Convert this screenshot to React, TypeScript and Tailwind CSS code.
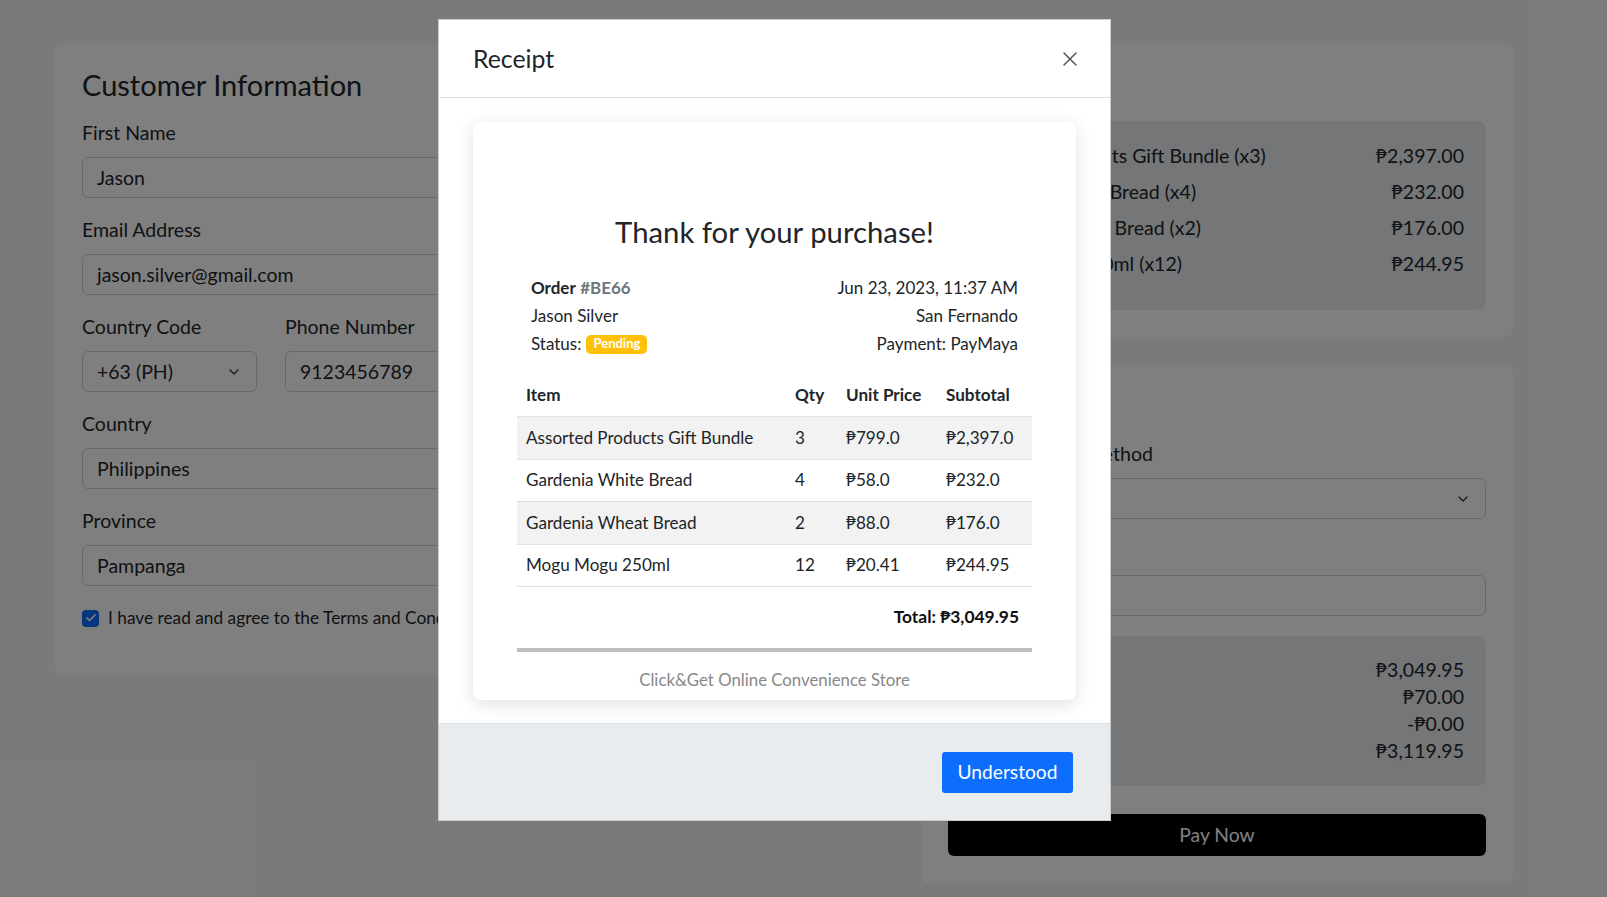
import React from "react";
import { ChevronDown, Check, X } from "lucide-react";

function Label({ children }: { children: React.ReactNode }) {
  return <div className="mb-3 text-[19.5px] leading-6 text-[#212529]">{children}</div>;
}

function Field({ value, select = false }: { value: string; select?: boolean }) {
  return (
    <div className="flex h-[41px] items-center justify-between rounded-md border border-[#ced4da] bg-white px-[14px] text-[19.5px] text-[#212529]">
      <span>{value}</span>
      {select && <ChevronDown size={16} strokeWidth={2} className="text-[#343a40]" />}
    </div>
  );
}

function LeftCard() {
  return (
    <div className="w-[842px] shrink-0 self-start rounded-lg bg-white px-[27px] pb-[46px] pt-[25px]">
      <h3 className="text-[29px] leading-[34px]">Customer Information</h3>
      <div className="mt-[19px] flex flex-col gap-5">
        <div>
          <Label>First Name</Label>
          <Field value="Jason" />
        </div>
        <div>
          <Label>Email Address</Label>
          <Field value="jason.silver@gmail.com" />
        </div>
        <div className="grid grid-cols-[175px_1fr] gap-x-[28px]">
          <div>
            <Label>Country Code</Label>
            <Field value="+63 (PH)" select />
          </div>
          <div>
            <Label>Phone Number</Label>
            <Field value="9123456789" />
          </div>
        </div>
        <div>
          <Label>Country</Label>
          <Field value="Philippines" />
        </div>
        <div>
          <Label>Province</Label>
          <Field value="Pampanga" />
        </div>
        <div className="flex h-6 items-center gap-[9px]">
          <div className="flex h-[17px] w-[17px] items-center justify-center rounded-[4px] bg-[#0d6efd]">
            <Check size={12} strokeWidth={3.5} className="text-white" />
          </div>
          <span className="text-[17.3px] text-[#212529]">I have read and agree to the Terms and Conditions</span>
        </div>
      </div>
    </div>
  );
}

function SummaryCard() {
  const items = [
    ["Assorted Products Gift Bundle (x3)", "₱2,397.00"],
    ["Gardenia White Bread (x4)", "₱232.00"],
    ["Gardenia Wheat Bread (x2)", "₱176.00"],
    ["Mogu Mogu 250ml (x12)", "₱244.95"],
  ];
  return (
    <div className="rounded-lg bg-white px-[27px] pb-[27px] pt-[25px]">
      <h3 className="text-[29px] leading-[34px]">Summary</h3>
      <div className="mt-[19px] rounded-lg bg-[#e9ecef] px-[22px] pb-[28px] pt-[17px]">
        {items.map(([n, p]) => (
          <div key={n} className="flex h-9 items-center justify-between text-[19.5px]">
            <span>{n}</span>
            <span>{p}</span>
          </div>
        ))}
      </div>
    </div>
  );
}

function PaymentCard() {
  const rows = [
    ["Subtotal", "₱3,049.95"],
    ["Shipping Fee", "₱70.00"],
    ["Discount", "-₱0.00"],
    ["Total", "₱3,119.95"],
  ];
  return (
    <div className="rounded-lg bg-white px-[27px] pb-[27px] pt-[25px]">
      <h3 className="text-[29px] leading-[34px]">Payment</h3>
      <div className="mt-[18px] flex flex-col gap-5">
        <div>
          <Label>Select Payment Method</Label>
          <Field value="PayMaya" select />
        </div>
        <div>
          <Label>Delivery Notes</Label>
          <Field value="" />
        </div>
        <div className="rounded-lg bg-[#e9ecef] px-[22px] pb-[22px] pt-[20px]">
          {rows.map(([n, p]) => (
            <div key={n} className="flex h-[27px] items-center justify-between text-[19.5px]">
              <span>{n}</span>
              <span>{p}</span>
            </div>
          ))}
        </div>
      </div>
      <button className="mt-[28px] flex h-[42px] w-full items-center justify-center rounded-md bg-black text-[19.3px] text-white">
        Pay Now
      </button>
    </div>
  );
}

function Receipt() {
  const rows = [
    ["Assorted Products Gift Bundle", "3", "₱799.0", "₱2,397.0"],
    ["Gardenia White Bread", "4", "₱58.0", "₱232.0"],
    ["Gardenia Wheat Bread", "2", "₱88.0", "₱176.0"],
    ["Mogu Mogu 250ml", "12", "₱20.41", "₱244.95"],
  ];
  return (
    <div className="rounded-lg bg-white px-[44px] pb-[8px] pt-[93px] shadow-[0_4px_18px_rgba(0,0,0,0.12)]">
      <h2 className="text-center text-[29.3px] leading-[34px] text-[#212529]">Thank for your purchase!</h2>
      <div className="mt-[25px] px-[14px] text-[17px] text-[#212529]">
        <div className="flex h-7 items-center justify-between">
          <span>
            <span className="font-bold">Order</span> <span className="font-bold text-[#6c757d]">#BE66</span>
          </span>
          <span>Jun 23, 2023, 11:37 AM</span>
        </div>
        <div className="flex h-7 items-center justify-between">
          <span>Jason Silver</span>
          <span>San Fernando</span>
        </div>
        <div className="flex h-7 items-center justify-between">
          <span className="flex items-center">
            Status:
            <span className="ml-[5px] inline-flex h-[19px] items-center rounded-[5px] bg-[#ffc107] px-[7px] text-[13px] font-bold text-white">
              Pending
            </span>
          </span>
          <span>Payment: PayMaya</span>
        </div>
      </div>
      <div className="mt-[16px] text-[17.1px] text-[#212529]">
        <div className="grid h-[43px] grid-cols-[269px_51px_100px_1fr] items-center border-b border-[#dee2e6] font-bold">
          <span className="px-[9px]">Item</span>
          <span className="px-[9px]">Qty</span>
          <span className="px-[9px]">Unit Price</span>
          <span className="px-[9px]">Subtotal</span>
        </div>
        {rows.map((r, i) => (
          <div
            key={r[0]}
            className={
              "grid h-[42.5px] grid-cols-[269px_51px_100px_1fr] items-center border-b border-[#dee2e6] " +
              (i % 2 === 0 ? "bg-[#f2f2f2]" : "bg-white")
            }
          >
            {r.map((c, j) => (
              <span key={j} className="px-[9px]">
                {c}
              </span>
            ))}
          </div>
        ))}
      </div>
      <div className="mt-[18px] flex h-6 items-center justify-end pr-[13px] text-[17.4px] font-bold text-[#111]">
        Total: ₱3,049.95
      </div>
      <div className="mt-[19px] h-1 bg-[#bfbfbf]" />
      <div className="mt-[16px] flex h-6 items-center justify-center text-[16.8px] text-[#888]">
        Click&amp;Get Online Convenience Store
      </div>
    </div>
  );
}

function Modal() {
  return (
    <div className="absolute left-[438px] top-[19px] w-[673px] border border-black/20 bg-white">
      <div className="flex h-[78px] items-center justify-between border-b border-[#dee2e6] pl-[34px] pr-[28px]">
        <h5 className="text-[24.8px] text-[#212529]">Receipt</h5>
        <X size={24} strokeWidth={1.5} className="text-[#555]" />
      </div>
      <div className="px-[34px] pb-[23px] pt-[24px]">
        <Receipt />
      </div>
      <div className="flex h-[97px] items-center justify-end border-t border-[#dee2e6] bg-[#e9ecef] pr-[37px]">
        <button className="flex h-[41px] w-[131px] items-center justify-center rounded-[3px] bg-[#0d6efd] text-[19.2px] text-white">
          Understood
        </button>
      </div>
    </div>
  );
}

export default function App() {
  return (
    <div className="relative h-[897px] overflow-hidden bg-[#f5f5f5] font-[Lato,sans-serif] text-[#212529]">
      <div className="flex gap-6 pl-[55px] pt-[43px]">
        <LeftCard />
        <div className="flex w-[592px] shrink-0 flex-col gap-[28px]">
          <SummaryCard />
          <PaymentCard />
        </div>
      </div>
      <div className="absolute inset-0 bg-black/50" />
      <Modal />
    </div>
  );
}
